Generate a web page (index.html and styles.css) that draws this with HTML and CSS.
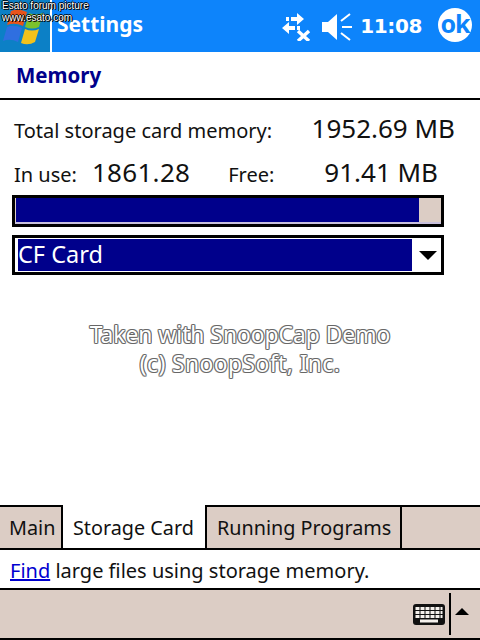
FILE: index.html
```html
<!DOCTYPE html>
<html lang="en">
<head>
<meta charset="utf-8">
<title>Settings - Memory</title>
<link rel="stylesheet" href="styles.css">
</head>
<body>
<div class="app">
  <header class="titlebar">
    <div class="start">
      <svg class="flag" width="50" height="52" viewBox="0 0 50 52">
        <path d="M11 11 Q18 8 27 12 L23 26 Q15 22 7 25 Z" fill="#e8541c"/>
        <path d="M29 13 Q35 16 43 13 L39 27 Q32 30 25 27 Z" fill="#7cc22c"/>
        <path d="M7 27 Q14 24 22 28 L18 42 Q10 38 3 41 Z" fill="#2f6fe0"/>
        <path d="M25 29 Q32 32 39 29 L35 42 Q28 46 21 43 Z" fill="#f3c21b"/>
      </svg>
    </div>
    <div class="title">Settings</div>
    <div class="tray">
      <svg class="ico-conn" width="32" height="30" viewBox="0 0 32 30">
        <path d="M10 6h6V2l7 6-7 6v-4h-6z M5 6h3v4H5z" fill="#fff"/>
        <path d="M14 15H8v-4l-7 6 7 6v-4h6z M16 15h3v4h-3z" fill="#fff"/>
        <path d="M17 20l11 10 M28 20L17 30" stroke="#fff" stroke-width="3.4" fill="none"/>
      </svg>
      <svg class="ico-vol" width="32" height="30" viewBox="0 0 32 30">
        <path d="M1 11h6l9-8v26l-9-8H1z" fill="#fff"/>
        <path d="M20 10l9-7 M21 16h10 M20 22l9 7" stroke="#fff" stroke-width="2" fill="none"/>
      </svg>
      <span class="clock">11:08</span>
      <span class="ok">ok</span>
    </div>
  </header>

  <h1 class="heading">Memory</h1>

  <main class="content">
    <div class="row row-total">
      <span class="label">Total storage card memory:</span>
      <span class="value total">1952.69 MB</span>
    </div>
    <div class="row row-use">
      <span class="label">In use:</span>
      <span class="value inuse">1861.28</span>
      <span class="label free-label">Free:</span>
      <span class="value free">91.41 MB</span>
    </div>
    <div class="progress"><div class="progress-fill" style="width:403px"></div></div>
    <div class="select">
      <div class="select-value">CF Card</div>
      <svg class="select-arrow" width="18" height="9" viewBox="0 0 18 9"><path d="M0 0h18L9 9z" fill="#000"/></svg>
    </div>
    <div class="stamp">
      <span class="stamp-line">Taken with SnoopCap Demo</span>
      <span class="stamp-line stamp-line-wide">(c) SnoopSoft, Inc.</span>
    </div>
  </main>

  <nav class="tabs">
    <div class="tab tab-main">Main</div>
    <div class="tab tab-storage active">Storage Card</div>
    <div class="tab tab-running">Running Programs</div>
    <div class="tab-rest"></div>
  </nav>

  <div class="hint"><a class="link" href="#">Find</a> large files using storage memory.</div>

  <footer class="menubar">
    <svg class="kbd" width="32" height="21" viewBox="0 0 32 21">
      <rect width="32" height="21" rx="3" fill="#111"/>
      <path d="M2.500 4.500h27M2.500 8.500h27M2.500 12.500h27" stroke="#f4f0ec" stroke-width="3" stroke-dasharray="4 1"/>
      <path d="M7 17h18" stroke="#f4f0ec" stroke-width="3"/>
    </svg>
    <div class="divider"></div>
    <svg class="up" width="14" height="7" viewBox="0 0 14 7"><path d="M7 0l7 7H0z" fill="#000"/></svg>
  </footer>

  <div class="overlay">Esato forum picture<br>www.esato.com</div>
</div>
</body>
</html>
```

FILE: styles.css
```css
* { box-sizing: border-box; }
html, body { margin: 0; padding: 0; background: #fff; }
body { font-family: "Noto Sans", "Open Sans", sans-serif; color: #111; }
.app { position: relative; width: 480px; height: 640px; display: flex; flex-direction: column; overflow: hidden; }

.titlebar { height: 52px; flex: none; background: #0d84fb; display: flex; align-items: center; color: #fff; }
.start { width: 52px; height: 52px; flex: none; background: #0c80c6; border-right: 2px solid #fff; }
.flag { display: block; }
.title { font-weight: 700; font-size: 21px; line-height: 28px; margin: -4px 0 0 5px; }
.tray { margin-left: auto; display: flex; align-items: center; height: 52px; }
.ico-conn { margin-right: 8px; }
.ico-vol { margin-right: 7px; }
.clock { font-family: "DejaVu Sans", sans-serif; font-weight: 700; font-size: 20px; letter-spacing: -.4px; margin-right: 16px; }
.ok { width: 34px; height: 34px; margin: -2px 8px 0 0; border-radius: 50%; background: #fff; color: #0d84fb; font-weight: 700; font-size: 25px; line-height: 30px; text-align: center; letter-spacing: -1px; }

.heading { margin: 0; flex: none; height: 48px; padding: 7px 0 0 16px; border-bottom: 2px solid #000; color: #00008b; font-size: 20.500px; line-height: 32px; font-weight: 700; }

.content { flex: 1; min-height: 0; padding: 0 36px 0 12px; display: flex; flex-direction: column; }
.row { display: flex; align-items: baseline; flex: none; }
.row-total { padding: 12px 0 0 2px; height: 56px; width: 443px; }
.row-use { padding: 0 0 0 2px; height: 39px; width: 426px; }
.label { font-size: 20px; line-height: 32px; }
.value { font-size: 26px; line-height: 32px; }
.total { margin-left: auto; }
.inuse { margin-left: 15px; letter-spacing: .3px; }
.free-label { margin-left: 38px; }
.free { margin-left: auto; }

.progress { width: 432px; height: 32px; flex: none; border: 3px solid #000; background: #dccdc5; box-shadow: inset 0 -2px 0 #c8c0dc; }
.progress-fill { height: 24px; margin-left: 1px; background: #00008b; }

.select { width: 432px; height: 40px; flex: none; margin-top: 8px; border: 3px solid #000; background: #fff; display: flex; align-items: center; padding: 0 3px; }
.select-value { width: 394px; height: 32px; background: #00008b; color: #fff; font-size: 23.500px; line-height: 31px; }
.select-arrow { margin-left: 7px; }

.stamp { margin: 45px 0 0 -12px; width: 480px; text-align: center; font-size: 22.800px; line-height: 29px; color: #fff; text-shadow: 1px 0 0 #666, -1px 0 0 #666, 0 1px 0 #666, 0 -1px 0 #666, 1px 1px 0 #999, -1px -1px 0 #999, 1px -1px 0 #999, -1px 1px 0 #999; }
.stamp-line { display: block; }
.stamp-line-wide { letter-spacing: .45px; }

.tabs { flex: none; height: 45px; display: flex; background: #dccdc5; border-top: 2px solid #000; border-bottom: 2px solid #000; font-size: 19.800px; }
.tab { flex: none; display: flex; align-items: center; padding-left: 10px; border-right: 2px solid #000; white-space: nowrap; }
.tab-main { width: 63px; padding-left: 9px; }
.tab-storage { width: 144px; }
.tab-running { width: 195px; }
.tab.active { background: #fff; margin-top: -2px; padding-top: 2px; }
.tab-rest { flex: 1; }

.hint { flex: none; height: 38px; padding-left: 10px; font-size: 20px; line-height: 42px; white-space: nowrap; }
.link { color: #0000d0; text-decoration: underline; }

.menubar { flex: none; height: 52px; background: #dccdc5; border-top: 2px solid #000; border-bottom: 2px solid #000; display: flex; align-items: center; justify-content: flex-end; }
.kbd { margin-right: 4px; }
.divider { width: 2px; height: 42px; background: #000; }
.up { margin: 0 11px 6px 4px; }

.overlay { position: absolute; left: 2px; top: 0; font-family: "Liberation Sans", sans-serif; font-size: 10px; line-height: 12px; color: #fff; text-shadow: 1px 1px 0 #000, -1px 0 0 #000, 0 -1px 0 #000, 1px 0 0 #000; }
```
